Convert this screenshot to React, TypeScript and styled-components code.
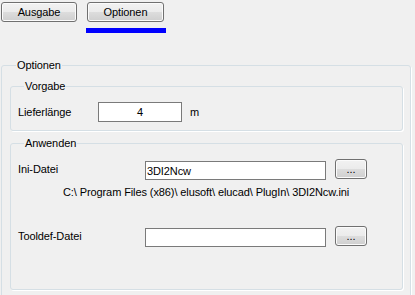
import React from "react";
import styled, { createGlobalStyle } from "styled-components";

const GlobalStyle = createGlobalStyle`
  html, body { margin: 0; padding: 0; overflow: hidden; background: #f0f0f0; }
  body { font-family: "Liberation Sans", Arial, sans-serif; font-size: 11px; color: #000; letter-spacing: -0.1px; }
  * { box-sizing: border-box; }
`;

const Page = styled.div`
  width: 415px;
  height: 295px;
  padding: 2px 0 0 1px;
  display: flex;
  flex-direction: column;
`;

const Toolbar = styled.div`
  display: flex;
  align-items: flex-start;
  gap: 9px;
`;

const TabColumn = styled.div`
  display: flex;
  flex-direction: column;
  align-items: flex-start;
  gap: 6px;
`;

const WinButton = styled.button<{ $w: number; $h: number; $offset?: number }>`
  width: ${(p) => p.$w}px;
  height: ${(p) => p.$h}px;
  margin: 0 0 0 ${(p) => p.$offset ?? 0}px;
  padding: 0;
  font: inherit;
  font-size: 11px;
  letter-spacing: -0.1px;
  color: #000;
  border: 1px solid #707070;
  border-radius: 3px;
  background: linear-gradient(#f2f2f2 0%, #ebebeb 50%, #dddddd 50%, #cfcfcf 100%);
  box-shadow: inset 0 0 0 1px #fbfbfb;
  display: flex;
  align-items: center;
  justify-content: center;
  line-height: 13px;
`;

const Underline = styled.div`
  width: 80px;
  height: 5px;
  background: #0000ff;
`;

const Group = styled.fieldset<{ $pad: string; $mt: number }>`
  margin: ${(p) => p.$mt}px 0 0 0;
  min-width: 0;
  padding: ${(p) => p.$pad};
  border: 1px solid #d5dfe5;
  border-radius: 3px;
  box-shadow: 1px 1px 0 #ffffff;
  display: flex;
  flex-direction: column;
`;

const Legend = styled.legend`
  padding: 0 1px;
  margin-left: 6px;
  line-height: 13px;
  font-size: 11px;
`;

const Row = styled.div<{ $mt?: number }>`
  display: flex;
  align-items: flex-start;
  margin-top: ${(p) => p.$mt ?? 0}px;
`;

const Label = styled.span<{ $w: number }>`
  width: ${(p) => p.$w}px;
  flex: none;
  line-height: 13px;
  align-self: center;
`;

const TextBox = styled.input<{ $w: number; $h: number; $mt?: number; $center?: boolean }>`
  width: ${(p) => p.$w}px;
  height: ${(p) => p.$h}px;
  margin: ${(p) => p.$mt ?? 0}px 0 0 0;
  padding: 0 1px;
  border: 1px solid #7a7a7a;
  background: #fff;
  font: inherit;
  font-size: 11px;
  letter-spacing: -0.1px;
  color: #000;
  text-align: ${(p) => (p.$center ? "center" : "left")};
  outline: none;
  flex: none;
`;

const Unit = styled.span`
  margin-left: 8px;
  line-height: 13px;
  align-self: center;
`;

const PathText = styled.div`
  margin-top: 6px;
  padding-left: 45px;
  line-height: 13px;
  white-space: nowrap;
`;

export default function App() {
  return (
    <>
      <GlobalStyle />
      <Page>
        <Toolbar>
          <WinButton $w={76} $h={20}>Ausgabe</WinButton>
          <TabColumn>
            <WinButton $w={77} $h={20} $offset={1}>Optionen</WinButton>
            <Underline />
          </TabColumn>
        </Toolbar>
        <Group $pad="8px 7px 10px 8px" $mt={26} style={{ width: 410 }}>
          <Legend>Optionen</Legend>
          <Group $pad="9px 8px 8px 7px" $mt={0}>
            <Legend>Vorgabe</Legend>
            <Row>
              <Label $w={80}>Lieferlänge</Label>
              <TextBox $w={84} $h={20} $center readOnly value="4" />
              <Unit>m</Unit>
            </Row>
          </Group>
          <Group $pad="9px 8px 42px 7px" $mt={6}>
            <Legend>Anwenden</Legend>
            <Row>
              <Label $w={127}>Ini-Datei</Label>
              <TextBox $w={181} $h={19} $mt={2} readOnly value="3DI2Ncw" />
              <WinButton $w={32} $h={20} $offset={9}>...</WinButton>
            </Row>
            <PathText>C:\ Program Files (x86)\ elusoft\ elucad\ PlugIn\ 3DI2Ncw.ini</PathText>
            <Row $mt={27}>
              <Label $w={127}>Tooldef-Datei</Label>
              <TextBox $w={181} $h={19} $mt={2} readOnly value="" />
              <WinButton $w={32} $h={20} $offset={9}>...</WinButton>
            </Row>
          </Group>
        </Group>
      </Page>
    </>
  );
}
